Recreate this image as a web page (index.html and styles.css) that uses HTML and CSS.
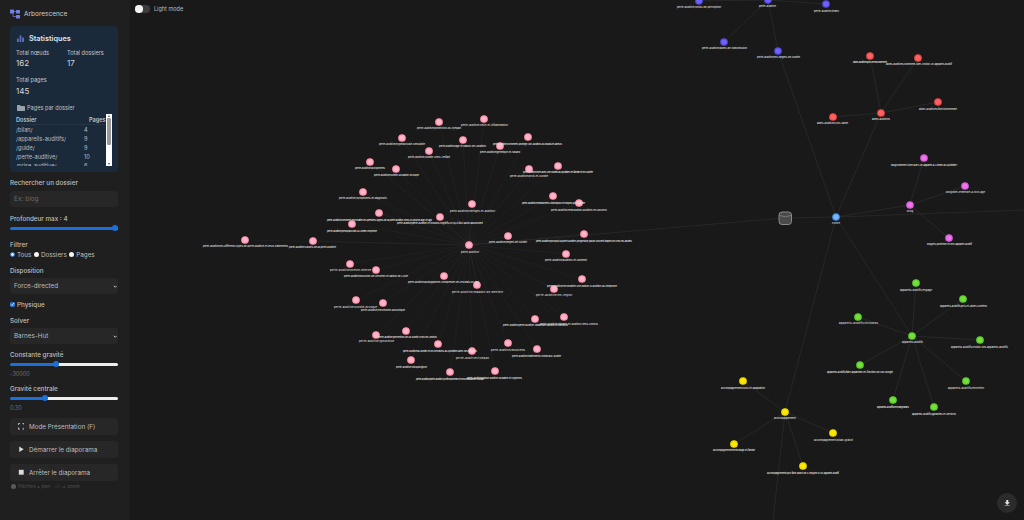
FILE: index.html
```html
<!DOCTYPE html>
<html lang="fr">
<head>
<meta charset="utf-8">
<title>Arborescence</title>
<link rel="stylesheet" href="styles.css">
</head>
<body>
<aside class="sidebar">
  <header class="brand">
    <svg class="brand-icon" viewBox="0 0 10 10"><path class="brand-link" d="M2 2.5H7M3 3V7.500H7"/><rect x="0" y="0.500" width="4" height="4" rx=".6"/><rect x="6" y="1" width="4" height="3.500" rx=".6"/><rect x="6" y="6" width="4" height="3.500" rx=".6"/></svg>
    <span>Arborescence</span>
  </header>
  <section class="card">
    <h2 class="card-title"><svg class="bars" viewBox="0 0 8 8"><rect x="0" y="4" width="2" height="4"/><rect x="3" y="0.500" width="2" height="7.500"/><rect x="6" y="3" width="2" height="5"/></svg>Statistiques</h2>
    <div class="stats">
      <div class="stat"><div class="stat-label">Total nœuds</div><div class="stat-value">162</div></div>
      <div class="stat"><div class="stat-label">Total dossiers</div><div class="stat-value">17</div></div>
      <div class="stat stat-wide"><div class="stat-label">Total pages</div><div class="stat-value">145</div></div>
    </div>
    <h3 class="folder-title"><svg class="folder" viewBox="0 0 8 6"><path d="M0 .6Q0 0 .6 0H3L3.800 1H7.400Q8 1 8 1.600V5.400Q8 6 7.400 6H.6Q0 6 0 5.400Z"/></svg>Pages par dossier</h3>
    <div class="table-box">
      <div class="table-clip">
        <table class="folders">
          <thead><tr><th>Dossier</th><th class="num">Pages</th></tr></thead>
          <tbody>
            <tr><td>/bilan/</td><td class="num">4</td></tr>
            <tr><td>/appareils-auditifs/</td><td class="num">9</td></tr>
            <tr><td>/guide/</td><td class="num">9</td></tr>
            <tr><td>/perte-auditive/</td><td class="num">10</td></tr>
            <tr><td>/prise-auditive/</td><td class="num">6</td></tr>
          </tbody>
        </table>
      </div>
      <div class="scrollbar"><span class="arrow-up"></span><span class="thumb"></span><span class="arrow-down"></span></div>
    </div>
  </section>

  <label class="label gap-7" for="q">Rechercher un dossier</label>
  <input class="text-input gap-4" id="q" type="text" placeholder="Ex: blog">

  <label class="label gap-8" for="depth">Profondeur max : 4</label>
  <input class="range gap-2" id="depth" type="range" min="0" max="4" value="4" style="--p:97%">

  <div class="label gap-10">Filtrer</div>
  <div class="radios gap-1">
    <label class="opt"><input type="radio" name="f" checked>Tous</label>
    <label class="opt"><input type="radio" name="f">Dossiers</label>
    <label class="opt"><input type="radio" name="f">Pages</label>
  </div>

  <label class="label gap-8" for="layout">Disposition</label>
  <div class="select-wrap gap-4">
    <select class="select" id="layout"><option>Force-directed</option></select>
    <svg class="chev" viewBox="0 0 6 4"><path d="M1 1L3 3L5 1"/></svg>
  </div>

  <label class="check gap-6"><input type="checkbox" checked>Physique</label>

  <label class="label gap-8" for="solver">Solver</label>
  <div class="select-wrap gap-4">
    <select class="select" id="solver"><option>Barnes-Hut</option></select>
    <svg class="chev" viewBox="0 0 6 4"><path d="M1 1L3 3L5 1"/></svg>
  </div>

  <label class="label gap-6" for="grav">Constante gravité</label>
  <input class="range gap-2" id="grav" type="range" min="0" max="100" value="42" style="--p:42%">
  <div class="value gap-2">-30000</div>

  <label class="label gap-7" for="center">Gravité centrale</label>
  <input class="range gap-2" id="center" type="range" min="0" max="100" value="31" style="--p:31%">
  <div class="value gap-3">0.30</div>

  <button class="btn"><svg class="btn-icon" viewBox="0 0 8 8"><path class="stroke" d="M.5 2.500V.5H2.500M5.500 .5H7.500V2.500M7.500 5.500V7.500H5.500M2.500 7.500H.5V5.500"/></svg>Mode Présentation (F)</button>
  <button class="btn"><svg class="btn-icon" viewBox="0 0 8 8"><path d="M1.500 .5L7 4L1.500 7.500Z"/></svg>Démarrer le diaporama</button>
  <button class="btn"><svg class="btn-icon" viewBox="0 0 8 8"><rect x="1" y="1" width="6" height="6"/></svg>Arrêter le diaporama</button>
  <div class="hint"><span class="hint-dot"></span>Flèches = pan · +/- = zoom</div>
</aside>

<main class="canvas">
  <svg class="graph" viewBox="130 0 894 520">
    <path class="edge" d="M469 245L245 240M469 245L313 241M469 245L352 224M469 245L379 213M469 245L363 192M469 245L396 169M469 245L370 162M469 245L402 138M469 245L429 151M469 245L439 122M469 245L484 119M469 245L463 140M469 245L528 137M469 245L500 146M469 245L529 169M469 245L558 166M469 245L553 196M469 245L579 203M469 245L472 204M469 245L440 217M469 245L508 236M469 245L584 234M469 245L566 254M469 245L582 279M469 245L554 289M469 245L350 264M469 245L376 270M469 245L444 276M469 245L477 285M469 245L356 300M469 245L383 303M469 245L535 319M469 245L564 317M469 245L406 331M469 245L376 335M469 245L438 344M469 245L472 351M469 245L508 343M469 245L537 349M469 245L411 360M469 245L450 372M469 245L495 371"/>
    <path class="edge edge-strong" d="M469 245L785 218L836 217M836 217L778 51M836 217L881 113M836 217L910 205M836 217L1024 210M836 217L912 336M836 217L785 412M785 412L773 520M778 51L768 0M768 0L724 42M768 0L699 1M768 0L826 4M881 113L870 56M881 113L918 58M881 113L938 102M881 113L833 117M910 205L924 158M910 205L965 186M910 205L949 238M912 336L916 283M912 336L963 299M912 336L858 317M912 336L980 340M912 336L860 365M912 336L966 381M912 336L893 400M912 336L934 407M785 412L743 381M785 412L833 433M785 412L734 444M785 412L803 466"/>

    <g class="db"><rect x="779" y="212" width="12.500" height="12.500" rx="3"/><path d="M779.500 215.500Q785 218 791 215.500"/></g>

    <g class="nodes pink">
      <circle cx="469" cy="245" r="3.300"/><circle cx="245" cy="240" r="3.300"/><circle cx="313" cy="241" r="3.300"/><circle cx="352" cy="224" r="3.300"/><circle cx="379" cy="213" r="3.300"/><circle cx="363" cy="192" r="3.300"/><circle cx="396" cy="169" r="3.300"/><circle cx="370" cy="162" r="3.300"/><circle cx="402" cy="138" r="3.300"/><circle cx="429" cy="151" r="3.300"/><circle cx="439" cy="122" r="3.300"/><circle cx="484" cy="119" r="3.300"/><circle cx="463" cy="140" r="3.300"/><circle cx="528" cy="137" r="3.300"/><circle cx="500" cy="146" r="3.300"/><circle cx="529" cy="169" r="3.300"/><circle cx="558" cy="166" r="3.300"/><circle cx="553" cy="196" r="3.300"/><circle cx="579" cy="203" r="3.300"/><circle cx="472" cy="204" r="3.300"/><circle cx="440" cy="217" r="3.300"/><circle cx="508" cy="236" r="3.300"/><circle cx="584" cy="234" r="3.300"/><circle cx="566" cy="254" r="3.300"/><circle cx="582" cy="279" r="3.300"/><circle cx="554" cy="289" r="3.300"/><circle cx="350" cy="264" r="3.300"/><circle cx="376" cy="270" r="3.300"/><circle cx="444" cy="276" r="3.300"/><circle cx="477" cy="285" r="3.300"/><circle cx="356" cy="300" r="3.300"/><circle cx="383" cy="303" r="3.300"/><circle cx="535" cy="319" r="3.300"/><circle cx="564" cy="317" r="3.300"/><circle cx="406" cy="331" r="3.300"/><circle cx="376" cy="335" r="3.300"/><circle cx="438" cy="344" r="3.300"/><circle cx="472" cy="351" r="3.300"/><circle cx="508" cy="343" r="3.300"/><circle cx="537" cy="349" r="3.300"/><circle cx="411" cy="360" r="3.300"/><circle cx="450" cy="372" r="3.300"/><circle cx="495" cy="371" r="3.300"/>
    </g>
    <g class="nodes violet">
      <circle cx="699" cy="1" r="3.300"/><circle cx="768" cy="0" r="3.300"/><circle cx="826" cy="4" r="3.300"/><circle cx="724" cy="42" r="3.300"/><circle cx="778" cy="51" r="3.300"/>
    </g>
    <g class="nodes red">
      <circle cx="870" cy="56" r="3.300"/><circle cx="918" cy="58" r="3.300"/><circle cx="938" cy="102" r="3.300"/><circle cx="881" cy="113" r="3.300"/><circle cx="833" cy="117" r="3.300"/>
    </g>
    <g class="nodes magenta">
      <circle cx="924" cy="158" r="3.300"/><circle cx="965" cy="186" r="3.300"/><circle cx="910" cy="205" r="3.300"/><circle cx="949" cy="238" r="3.300"/>
    </g>
    <g class="nodes root"><circle cx="836" cy="217" r="3.300"/></g>
    <g class="nodes green">
      <circle cx="916" cy="283" r="3.300"/><circle cx="963" cy="299" r="3.300"/><circle cx="858" cy="317" r="3.300"/><circle cx="912" cy="336" r="3.300"/><circle cx="980" cy="340" r="3.300"/><circle cx="860" cy="365" r="3.300"/><circle cx="966" cy="381" r="3.300"/><circle cx="893" cy="400" r="3.300"/><circle cx="934" cy="407" r="3.300"/>
    </g>
    <g class="nodes yellow">
      <circle cx="743" cy="381" r="3.300"/><circle cx="785" cy="412" r="3.300"/><circle cx="833" cy="433" r="3.300"/><circle cx="734" cy="444" r="3.300"/><circle cx="803" cy="466" r="3.300"/>
    </g>

    <g class="labels">
      <text x="461" y="253" textLength="18">perte-auditive</text>
      <text x="203" y="247" textLength="85">perte-auditive/les-differents-types-de-perte-auditive-et-leurs-traitements</text>
      <text x="289" y="248" textLength="47">perte-auditive/causes-de-la-perte-auditive</text>
      <text x="327" y="231.500" textLength="50">perte-auditive/presbyacousie-a-l-oreille-moyenne</text>
      <text x="327" y="220.500" textLength="105">perte-auditive/comment-reconnaitre-les-premiers-signes-de-la-perte-auditive-chez-un-proche-age-et-agir</text>
      <text x="339" y="199" textLength="48">perte-auditive/symptomes-et-diagnostic</text>
      <text x="374" y="176" textLength="45">perte-auditive/surdite-soudaine-brusque</text>
      <text x="355" y="169" textLength="30">perte-auditive/acouphenes</text>
      <text x="379" y="145" textLength="46">perte-auditive/hyperacousie-sensibilite</text>
      <text x="408" y="158" textLength="42">perte-auditive/surdite-chez-l-enfant</text>
      <text x="417" y="129" textLength="44">perte-auditive/protection-du-tympan</text>
      <text x="461" y="126" textLength="47">perte-auditive/otite-et-inflammation</text>
      <text x="439" y="147" textLength="47">perte-auditive/age-et-baisse-de-l-audition</text>
      <text x="493" y="145" textLength="69">perte-auditive/comment-proteger-son-audition-au-travail-et-ailleurs</text>
      <text x="480" y="153" textLength="40">perte-auditive/genetique-et-hasard</text>
      <text x="510" y="176.500" textLength="38">perte-auditive/bruit-et-surdite</text>
      <text x="523" y="173" textLength="70">perte-auditive/vivre-avec-une-surdite-au-quotidien-en-famille-et-en-societe</text>
      <text x="522" y="204" textLength="63">perte-auditive/medicaments-ototoxiques-et-risques-pour-l-oreille</text>
      <text x="551" y="210.500" textLength="56">perte-auditive/reeducation-auditive-en-douceur</text>
      <text x="450" y="211.500" textLength="45">perte-auditive/vertiges-et-audition</text>
      <text x="397" y="224" textLength="86">perte-auditive/perte-auditive-et-troubles-cognitifs-ce-qu-il-faut-savoir-absolument</text>
      <text x="489" y="242.500" textLength="38">perte-auditive/degres-de-surdite</text>
      <text x="536" y="241.500" textLength="96">perte-auditive/pourquoi-la-perte-auditive-progressive-passe-souvent-inapercue-chez-les-adultes</text>
      <text x="545" y="261" textLength="42">perte-auditive/audition-et-sommeil</text>
      <text x="547" y="287" textLength="70">perte-auditive/reconnaitre-une-baisse-d-audition-au-telephone</text>
      <text x="536" y="296" textLength="36">perte-auditive/en-region</text>
      <text x="330" y="271" textLength="41">perte-auditive/oreille-interne</text>
      <text x="344" y="277" textLength="64">perte-auditive/bouchon-de-cerumen-et-baisse-de-l-ouie</text>
      <text x="408" y="283" textLength="71">perte-auditive/audiogramme-comprendre-les-resultats-du-test</text>
      <text x="452" y="293" textLength="51">perte-auditive/maladie-de-meniere</text>
      <text x="334" y="307.500" textLength="43">perte-auditive/surdite-brusque</text>
      <text x="361" y="311" textLength="44">perte-auditive/neurinome-acoustique</text>
      <text x="503" y="326" textLength="65">perte-auditive/perte-auditive-unilaterale-causes-et-solutions</text>
      <text x="540" y="324.500" textLength="58">perte-auditive/diabete-et-audition-liens-connus</text>
      <text x="378" y="338" textLength="59">perte-auditive/prevention-de-la-surdite-chez-les-seniors</text>
      <text x="359" y="342" textLength="35">perte-auditive/grossesse</text>
      <text x="403" y="351.500" textLength="74">perte-auditive/la-surdite-et-les-emotions-au-quotidien-avec-ses-proches</text>
      <text x="456" y="359" textLength="33">perte-auditive/tympan</text>
      <text x="491" y="350.500" textLength="34">perte-auditive/musiciens</text>
      <text x="512" y="357" textLength="49">perte-auditive/traitements-medicaux-surdite</text>
      <text x="396" y="368" textLength="31">perte-auditive/otospongiose</text>
      <text x="416" y="379.500" textLength="68">perte-auditive/perte-auditive-professionnelle-et-reconnaissance-sociale</text>
      <text x="467" y="378.500" textLength="55">perte-auditive/baisse-auditive-soudaine-et-urgences</text>

      <text x="677" y="8" textLength="44">perte-auditive/seuils-de-perception</text>
      <text x="759" y="6.500" textLength="17">perte-auditive</text>
      <text x="814" y="11.500" textLength="25">perte-auditive/index</text>
      <text x="702" y="49" textLength="45">perte-auditive/aides-de-transmission</text>
      <text x="757" y="58" textLength="43">perte-auditive/les-degres-de-surdite</text>

      <text x="853" y="63" textLength="34">aides-auditives/prix-remboursement</text>
      <text x="886" y="65" textLength="66">aides-auditives/comment-bien-choisir-un-appareil-auditif</text>
      <text x="919" y="110" textLength="38">aides-auditives/fonctionnement</text>
      <text x="872" y="120" textLength="18">aides-auditives</text>
      <text x="817" y="124" textLength="31">aides-auditives/100-sante</text>

      <text x="891" y="166" textLength="66">blog/comment-vivre-avec-un-appareil-a-l-oreille-au-quotidien</text>
      <text x="946" y="193" textLength="39">blog/bien-entendre-a-tout-age</text>
      <text x="907" y="212" textLength="6">blog</text>
      <text x="927" y="245" textLength="45">blog/les-prothese-et-leur-appareil-auditif</text>
      <text x="832" y="224" textLength="8">home</text>

      <text x="900" y="291" textLength="32">appareils-auditifs/reglage</text>
      <text x="940" y="306.500" textLength="47">appareils-auditifs/prix-et-aides-lunettes</text>
      <text x="839" y="324" textLength="39">appareils-auditifs/invisibles</text>
      <text x="902" y="343" textLength="21">appareils-auditifs</text>
      <text x="951" y="348" textLength="57">appareils-auditifs/choisir-ses-appareils-auditifs</text>
      <text x="827" y="373" textLength="66">appareils-auditifs/faire-appareiller-en-fonction-de-son-budget</text>
      <text x="948" y="389" textLength="36">appareils-auditifs/entretien</text>
      <text x="877" y="408" textLength="32">appareils-auditifs/rechargeables</text>
      <text x="912" y="415" textLength="44">appareils-auditifs/garanties-et-services</text>

      <text x="721" y="388.500" textLength="44">accompagnement/suivi-et-adaptation</text>
      <text x="774" y="419" textLength="22">accompagnement</text>
      <text x="814" y="441" textLength="39">accompagnement/bilan-gratuit</text>
      <text x="713" y="451" textLength="42">accompagnement/entourage-et-famille</text>
      <text x="767" y="473.500" textLength="72">accompagnement/que-faire-avant-de-s-equiper-d-un-appareil-auditif</text>
    </g>
  </svg>

  <label class="mode-toggle"><span class="switch"><span class="knob"></span></span>Light mode</label>
  <button class="download" aria-label="Télécharger"><svg viewBox="0 0 10 10"><path d="M3.500 0H6.500V3.500H9L5 7.500L1 3.500H3.500Z"/><rect x="1" y="8.500" width="8" height="1.300"/></svg></button>
</main>
</body>
</html>
```

FILE: styles.css
```css
* { box-sizing: border-box; }

html, body {
  margin: 0;
  height: 100%;
  overflow: hidden;
}

body {
  display: flex;
  background: #191919;
  color: #d8d8d8;
  font-family: Inter, "Liberation Sans", sans-serif;
  font-size: 6.5px;
}

.sidebar {
  width: 130px;
  flex: none;
  height: 520px;
  padding: 9px 12px 0 10px;
  background: #1f1f1f;
  display: flex;
  flex-direction: column;
  overflow: hidden;
}

.brand {
  display: flex;
  align-items: center;
  gap: 4px;
  height: 10px;
  font-size: 6.500px;
  color: #d0d0d0;
}

.brand-icon { width: 10px; height: 10px; fill: #6f7fe6; }
.brand-link { fill: none; stroke: #6f7fe6; stroke-width: .7; }

.card {
  margin-top: 7px;
  height: 146px;
  padding: 7px 6px 0 6px;
  background: #1b2a3a;
  border-radius: 4px;
  display: flex;
  flex-direction: column;
  flex: none;
}

.card-title {
  margin: 0;
  display: flex;
  align-items: center;
  gap: 5px;
  height: 10px;
  font-size: 7.300px;
  font-weight: 600;
  color: #dfe3e8;
}

.bars { width: 7px; height: 7px; margin-left: 1px; fill: #5f70c8; }

.stats {
  margin-top: 5.500px;
  display: grid;
  grid-template-columns: 51px 1fr;
  row-gap: 7px;
}

.stat-label { height: 8px; line-height: 8px; font-size: 5.600px; color: #c0c6cc; }
.stat-value { margin-top: 1.500px; height: 11px; line-height: 11px; font-size: 8px; color: #d4d9de; }
.stat-wide { grid-column: 1 / -1; }

.folder-title {
  margin: 7.500px 0 0 1px;
  display: flex;
  align-items: center;
  gap: 2px;
  height: 8px;
  font-size: 5.600px;
  font-weight: 400;
  color: #bcc2c8;
}

.folder { width: 8px; height: 6px; fill: #99a2aa; }

.table-box {
  margin-top: 2px;
  display: flex;
  height: 52px;
}

.table-clip { width: 90px; height: 50px; margin-top: 1.500px; overflow: hidden; flex: none; }

.folders {
  width: 102px;
  border-collapse: collapse;
  font-size: 5.600px;
  color: #b6bdc4;
}

.folders th {
  height: 9px;
  padding: 0;
  text-align: left;
  font-weight: 600;
  color: #c0c6cc;
  border-bottom: 1px solid #263648;
}

.folders td { height: 9px; padding: 0; }
.folders tbody tr:first-child td { height: 10px; padding-top: 1px; }
.folders .num { width: 34px; }
.folders th.num { padding-left: 5px; }

.scrollbar {
  width: 6px;
  height: 52px;
  background: #fff;
  display: flex;
  flex-direction: column;
  align-items: center;
  justify-content: space-between;
  padding: 1px 0;
}

.thumb { width: 4px; height: 27px; background: #9a9a9a; margin-bottom: 18px; border-radius: 1px; }
.arrow-up, .arrow-down { width: 0; height: 0; border-left: 1.500px solid transparent; border-right: 1.500px solid transparent; }
.arrow-up { border-bottom: 2px solid #555; }
.arrow-down { border-top: 2px solid #555; }

.label {
  display: block;
  height: 8px;
  line-height: 8px;
  font-size: 6.300px;
  font-weight: 500;
  color: #bfbfbf;
  flex: none;
}

.gap-1 { margin-top: 1.500px; }
.gap-2 { margin-top: 2.500px; }
.gap-3 { margin-top: 3px; }
.gap-4 { margin-top: 3.500px; }
.gap-6 { margin-top: 6.500px; }
.gap-7 { margin-top: 7px; }
.gap-8 { margin-top: 8px; }
.gap-10 { margin-top: 10px; }

.text-input, .select {
  width: 108px;
  height: 16px;
  border: 0;
  border-radius: 3px;
  background: #272727;
  color: #bdbdbd;
  font: inherit;
  padding: 0 4px;
  outline: 0;
  flex: none;
}

.text-input::placeholder { color: #6a6a6a; opacity: 1; }

.select { appearance: none; -webkit-appearance: none; display: block; font-size: 6.300px; }

.select-wrap { position: relative; width: 108px; height: 16px; flex: none; }

.chev {
  position: absolute;
  right: 1px;
  top: 6.500px;
  width: 4.500px;
  height: 3px;
  fill: none;
  stroke: #d0d0d0;
  stroke-width: 1.200;
}

.range {
  appearance: none;
  -webkit-appearance: none;
  display: block;
  width: 108px;
  height: 6px;
  margin-left: 0;
  margin-right: 0;
  margin-bottom: 0;
  padding: 0;
  background: transparent;
  flex: none;
}

.range::-webkit-slider-runnable-track {
  height: 3px;
  border-radius: 2px;
  background: linear-gradient(to right, #1a6fd8 var(--p), #eeeeee var(--p));
}

.range::-webkit-slider-thumb {
  -webkit-appearance: none;
  width: 6px;
  height: 6px;
  margin-top: -1.500px;
  border-radius: 50%;
  background: #1a6fd8;
  border: 0;
}

.radios {
  display: flex;
  height: 8px;
  align-items: center;
  gap: 2.500px;
  font-size: 6.300px;
  color: #bfbfbf;
  flex: none;
}

.opt { display: flex; align-items: center; gap: 2px; }

.opt input {
  appearance: none;
  -webkit-appearance: none;
  margin: 0;
  width: 5px;
  height: 5px;
  border-radius: 50%;
  background: #f4f4f4;
}

.opt input:checked { border: 1.300px solid #2a7ad8; background: #dbe9f8; }

.check input {
  margin: 0;
  width: 5px;
  height: 5px;
  accent-color: #1a6fd8;
}

.check {
  display: flex;
  align-items: center;
  gap: 2px;
  height: 8px;
  font-size: 6.300px;
  font-weight: 500;
  color: #bfbfbf;
  flex: none;
}

.value { height: 8px; line-height: 8px; font-size: 5.500px; color: #707070; flex: none; }

.btn {
  width: 108px;
  height: 17px;
  margin-top: 6px;
  flex: none;
  border: 0;
  border-radius: 3px;
  background: #272727;
  color: #bfbfbf;
  font: inherit;
  font-size: 6.300px;
  display: flex;
  align-items: center;
  gap: 5px;
  padding: 0 0 0 7.500px;
}

.btn-icon { width: 6.500px; height: 6.500px; fill: #dcdcdc; flex: none; }
.stroke { fill: none; stroke: #dcdcdc; stroke-width: 1; }

.hint {
  margin-top: 2px;
  height: 6px;
  display: flex;
  align-items: center;
  gap: 2px;
  font-size: 4.800px;
  color: #505050;
  flex: none;
}

.hint-dot { width: 5px; height: 5px; margin-left: 1px; border-radius: 50%; background: #5a5a5a; }

.canvas {
  position: relative;
  flex: 1;
  height: 520px;
  overflow: hidden;
}

.graph { position: absolute; left: 0; top: 0; width: 894px; height: 520px; }

.edge { fill: none; stroke: #ffffff; stroke-opacity: .06; stroke-width: .6; }
.edge-strong { stroke-opacity: .09; stroke-width: .7; }

.db rect { fill: #4a4a4a; stroke: #8a8a8a; stroke-width: 1; }
.db path { fill: none; stroke: #8a8a8a; stroke-width: .7; }

.nodes circle { stroke-width: 1.100; }
.pink circle { fill: #ffb6c8; stroke: #ff8aa6; }
.violet circle { fill: #6f63ff; stroke: #4f45d8; }
.red circle { fill: #ff6262; stroke: #e54545; }
.magenta circle { fill: #ec74ec; stroke: #cf55cf; }
.root circle { fill: #78b8ff; stroke: #3d86d6; }
.green circle { fill: #74e03c; stroke: #5bc52a; }
.yellow circle { fill: #ffe800; stroke: #e8d200; }

.labels text {
  font-family: Inter, "Liberation Sans", sans-serif;
  font-size: 2.600px;
  font-weight: 500;
  fill: #e0e0e0;
}

.mode-toggle {
  position: absolute;
  left: 5px;
  top: 5px;
  display: flex;
  align-items: center;
  gap: 4px;
  height: 8px;
  font-size: 5.500px;
  color: #bdbdbd;
}

.switch {
  width: 15px;
  height: 7.500px;
  border-radius: 4px;
  background: #3c3c3c;
  display: block;
}

.knob { display: block; width: 7.500px; height: 7.500px; border-radius: 50%; background: #f4f4f4; }

.download {
  position: absolute;
  right: 7px;
  bottom: 7px;
  width: 20px;
  height: 20px;
  padding: 0;
  border: 0;
  border-radius: 50%;
  background: #2b2b2b;
  display: flex;
  align-items: center;
  justify-content: center;
}

.download svg { width: 6.500px; height: 6.500px; fill: #e6e6e6; }
```
